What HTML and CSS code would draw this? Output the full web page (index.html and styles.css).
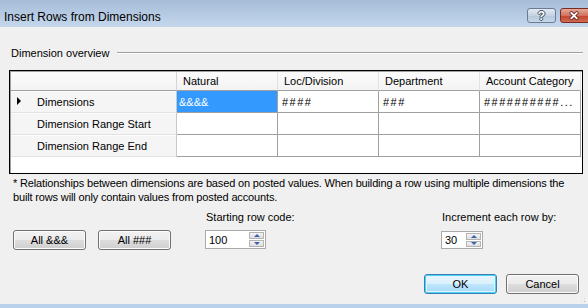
FILE: index.html
```html
<!DOCTYPE html>
<html lang="en">
<head>
    <meta charset="UTF-8">
    <title>Insert Rows from Dimensions</title>
    <link rel="stylesheet" href="styles.css">
</head>
<body>
    <div class="window">
        <div class="titlebar">
            <span class="title">Insert Rows from Dimensions</span>
            <div class="caption-buttons">
                <span class="cap help">?</span>
                <span class="cap close">&#x2715;</span>
            </div>
        </div>

        <div class="client">
            <div class="group-head">
                <span>Dimension overview</span>
                <span class="rule"></span>
            </div>

            <!-- Dimension grid -->
            <div class="grid-box">
                <div class="dim-grid">
                    <div class="col-head corner"></div>
                    <div class="col-head">Natural</div>
                    <div class="col-head">Loc/Division</div>
                    <div class="col-head">Department</div>
                    <div class="col-head">Account Category</div>

                    <div class="row-head"><span class="marker"></span>Dimensions</div>
                    <div class="cell selected">&amp;&amp;&amp;&amp;</div>
                    <div class="cell hash">####</div>
                    <div class="cell hash">###</div>
                    <div class="cell hash">##########...</div>

                    <div class="row-head">Dimension Range Start</div>
                    <div class="cell"></div>
                    <div class="cell"></div>
                    <div class="cell"></div>
                    <div class="cell"></div>

                    <div class="row-head">Dimension Range End</div>
                    <div class="cell"></div>
                    <div class="cell"></div>
                    <div class="cell"></div>
                    <div class="cell"></div>
                </div>
            </div>

            <p class="note">* Relationships between dimensions are based on posted values. When building a row using multiple dimensions the<br>built rows will only contain values from posted accounts.</p>

            <div class="options">
                <div class="opt-label start-label">Starting row code:</div>
                <div class="opt-label inc-label">Increment each row by:</div>
                <div class="all-buttons">
                    <button class="btn all-btn">All &amp;&amp;&amp;</button>
                    <button class="btn all-btn">All ###</button>
                </div>
                <div class="spinner wide">
                    <span class="spin-value">100</span>
                    <span class="spin-buttons"><span class="spin up"></span><span class="spin down"></span></span>
                </div>
                <div class="spinner narrow">
                    <span class="spin-value">30</span>
                    <span class="spin-buttons"><span class="spin up"></span><span class="spin down"></span></span>
                </div>
            </div>

            <div class="footer">
                <button class="btn dlg-btn default">OK</button>
                <button class="btn dlg-btn">Cancel</button>
            </div>
        </div>
        <div class="frame-bottom"></div>
        <span class="grip"></span>
    </div>
</body>
</html>
```

FILE: styles.css
```css
body {
    margin: 0;
    padding: 0;
    background-color: #f0f0f0;
    font-family: "Liberation Sans", Arial, sans-serif;
    font-size: 11px;
    color: #000;
}
.window {
    position: relative;
    width: 588px;
    height: 308px;
    display: flex;
    flex-direction: column;
    overflow: hidden;
}

/* Title bar */
.titlebar {
    height: 27px;
    flex: none;
    display: flex;
    background: linear-gradient(#a6bcd8, #c4d7ec);
}
.title {
    font-size: 12px;
    line-height: 14px;
    padding: 10px 0 0 4px;
    color: #000;
}
.caption-buttons {
    margin-left: auto;
    display: flex;
    gap: 4px;
    padding-top: 8px;
    margin-right: -20px;
}
.cap {
    height: 15px;
    box-sizing: border-box;
    border: 1px solid #6b7b92;
    border-radius: 3px;
    display: flex;
    align-items: center;
    justify-content: center;
    color: #fff;
    font-weight: bold;
    font-size: 12px;
    text-shadow: 1px 0 #3d4d63, -1px 0 #3d4d63, 0 1px #3d4d63, 0 -1px #3d4d63;
}
.cap.help {
    width: 29px;
    background: linear-gradient(#e2eaf4, #c5d3e4 50%, #b5c7dd 51%, #c8d7e9);
}
.cap.close {
    width: 48px;
    padding-right: 20px;
    border-color: #7b2b22;
    background: linear-gradient(#e5a899, #d0735e 50%, #c0442d 51%, #d26c52);
    text-shadow: 1px 0 #5b1a12, -1px 0 #5b1a12, 0 1px #5b1a12, 0 -1px #5b1a12;
}

/* Client area */
.client {
    flex: 1;
    display: flex;
    flex-direction: column;
}
.group-head {
    display: flex;
    align-items: center;
    margin: 19px 5px 10px 11px;
    line-height: 14px;
}
.group-head .rule {
    flex: 1;
    margin-left: 8px;
    border-top: 1px solid #a0a0a0;
    border-bottom: 1px solid #fff;
}

/* Grid */
.grid-box {
    margin-left: 9px;
    width: 574px;
    height: 104px;
    box-sizing: border-box;
    border: 1px solid #000;
    padding: 1px 0 0 1px;
    background: #fff;
    box-shadow: inset 1px 1px #a0a0a0;
}
.dim-grid {
    display: grid;
    grid-template-columns: 166px repeat(4, 101px);
    grid-template-rows: 19px repeat(3, 22px);
}
.dim-grid > div {
    box-sizing: border-box;
    white-space: nowrap;
    overflow: hidden;
    display: flex;
    align-items: center;
}
.col-head {
    background: linear-gradient(#fbfbfb, #f3f3f3);
    border-right: 1px solid #e2e2e2;
    border-bottom: 1px solid #a0a0a0;
    padding-left: 6px;
}
.col-head.corner {
    border-right-color: #d5d5d5;
}
.row-head {
    position: relative;
    background: #f5f5f5;
    border-right: 1px solid #c8c8c8;
    border-bottom: 1px solid #e2e2e2;
    box-shadow: inset 0 1px #fcfcfc;
    padding-left: 26px;
}
.marker {
    position: absolute;
    left: 6px;
    top: 6px;
    width: 0;
    height: 0;
    border-top: 4px solid transparent;
    border-bottom: 4px solid transparent;
    border-left: 4px solid #000;
}
.cell {
    border-right: 1px solid #a0a0a0;
    border-bottom: 1px solid #a0a0a0;
    padding-left: 4px;
}
.cell.selected {
    background: #3399ff;
    color: #fff;
    padding-left: 2px;
}
.cell.hash {
    letter-spacing: 1.5px;
}

/* Note */
.note {
    margin: 2px 0 0 13px;
    line-height: 14px;
    letter-spacing: -0.15px;
}

/* Options */
.options {
    display: grid;
    grid-template-columns: 192px 236px auto;
    grid-template-rows: 14px 20px;
    row-gap: 5px;
    margin: 7px 0 0 13px;
}
.start-label {
    grid-column: 2;
    grid-row: 1;
    padding-left: 1px;
}
.inc-label {
    grid-column: 3;
    grid-row: 1;
    padding-left: 1px;
}
.all-buttons {
    grid-column: 1;
    grid-row: 2;
    display: flex;
    gap: 12px;
}
.spinner {
    grid-row: 2;
    height: 19px;
    box-sizing: border-box;
    border: 1px solid #a9a9a9;
    background: #fff;
    display: flex;
    align-items: center;
    justify-content: space-between;
    padding: 1px;
}
.spinner.wide {
    grid-column: 2;
    width: 61px;
}
.spinner.narrow {
    grid-column: 3;
    width: 42px;
    margin-top: 1px;
    height: 18px;
}
.spin-value {
    padding-left: 2px;
}
.spin-buttons {
    display: flex;
    flex-direction: column;
    gap: 1px;
    align-self: stretch;
}
.spin {
    width: 15px;
    flex: 1;
    box-sizing: border-box;
    border: 1px solid #b4b4b4;
    background: linear-gradient(#f4f4f4, #dedede);
    display: flex;
    align-items: center;
    justify-content: center;
}
.spin.up::before,
.spin.down::before {
    content: "";
    border-left: 3px solid transparent;
    border-right: 3px solid transparent;
}
.spin.up::before {
    border-bottom: 3px solid #3b64a6;
}
.spin.down::before {
    border-top: 3px solid #3b64a6;
}

/* Buttons */
.btn {
    font-family: inherit;
    font-size: 11px;
    color: #000;
    height: 20px;
    padding: 0;
    border: 1px solid #707070;
    border-radius: 3px;
    background: linear-gradient(#f2f2f2, #ebebeb 50%, #dddddd 51%, #cfcfcf);
    box-shadow: inset 0 0 0 1px #fcfcfc;
}
.all-btn {
    width: 73px;
}
.footer {
    display: flex;
    justify-content: flex-end;
    gap: 9px;
    margin: 24px 9px 0 0;
}
.dlg-btn {
    width: 73px;
}
.dlg-btn.default {
    border-color: #3c7fb1;
    background: linear-gradient(#eaf6fd, #d9f0fc 50%, #bee6fd 51%, #a7d9f5);
    box-shadow: inset 0 0 0 1px #48d1f9, inset 0 0 0 2px #e5f4fc;
}
.frame-bottom {
    height: 4px;
    flex: none;
    background: #b9d1ea;
}
/* size grip sits over the bottom-right corner */
.grip {
    position: absolute;
    right: 2px;
    bottom: 5px;
    width: 6px;
    height: 6px;
    background: radial-gradient(circle, #b8b8b8 0.8px, transparent 1px) 0 0 / 3px 3px;
    clip-path: polygon(100% 0, 100% 100%, 0 100%);
}
```
